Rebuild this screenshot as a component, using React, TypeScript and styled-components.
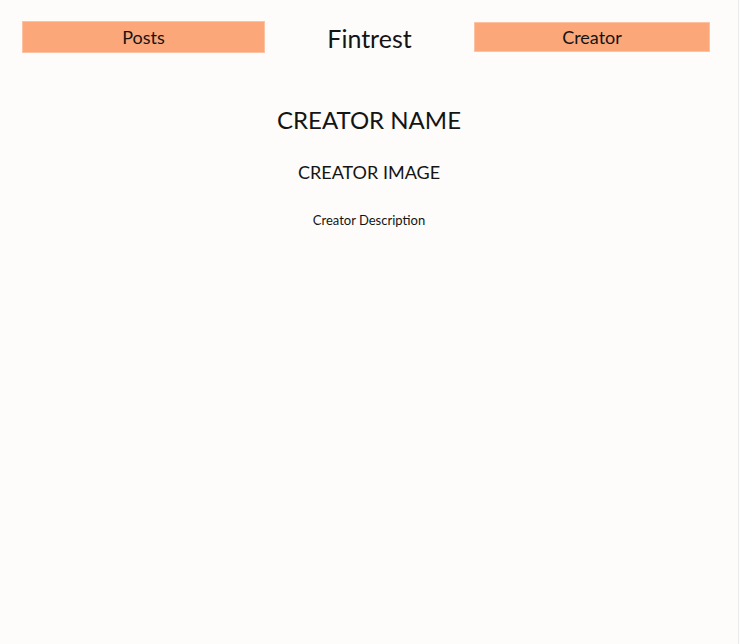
import styled, { createGlobalStyle } from 'styled-components';

const GlobalStyle = createGlobalStyle`
	html, body {
		margin: 0;
		padding: 0;
		background-color: #fdfcfa;
	}
	body {
		font-family: 'Lato', 'Noto Sans', sans-serif;
		color: #141414;
	}
`;

const Page = styled.div`
	width: 739px;
	min-height: 644px;
	box-sizing: border-box;
	border-right: 1px solid #ececec;
	background-color: #fdfcfa;
`;

const Header = styled.header`
	display: flex;
	align-items: flex-start;
	justify-content: space-between;
	padding: 21px 28px 0 22px;
`;

const NavButton = styled.button<{ $width: number; $height: number; $offset?: number }>`
	width: ${(p) => p.$width}px;
	height: ${(p) => p.$height}px;
	margin-top: ${(p) => p.$offset || 0}px;
	background-color: #fba77a;
	border: 1px solid #fcc2a3;
	font-family: inherit;
	font-size: 18px;
	color: #141414;
	padding: 0;
	cursor: pointer;
`;

const Brand = styled.h1`
	margin: 0;
	padding-top: 1px;
	font-size: 25px;
	line-height: 32px;
	font-weight: 400;
`;

const Profile = styled.main`
	display: flex;
	flex-direction: column;
	align-items: center;
	padding-top: 49px;
`;

const Name = styled.h2`
	margin: 0;
	font-size: 24px;
	font-weight: 400;
	line-height: 34px;
`;

const ImageLabel = styled.h3`
	margin: 22px 0 0;
	font-size: 18px;
	font-weight: 400;
	line-height: 26px;
`;

const Description = styled.p`
	margin: 26px 0 0;
	font-size: 13px;
	line-height: 18px;
`;

export default function App() {
	return (
		<>
			<GlobalStyle />
			<Page>
				<Header>
					<NavButton $width={243} $height={32}>Posts</NavButton>
					<Brand>Fintrest</Brand>
					<NavButton $width={236} $height={30} $offset={1}>Creator</NavButton>
				</Header>
				<Profile>
					<Name>CREATOR NAME</Name>
					<ImageLabel>CREATOR IMAGE</ImageLabel>
					<Description>Creator Description</Description>
				</Profile>
			</Page>
		</>
	);
}
